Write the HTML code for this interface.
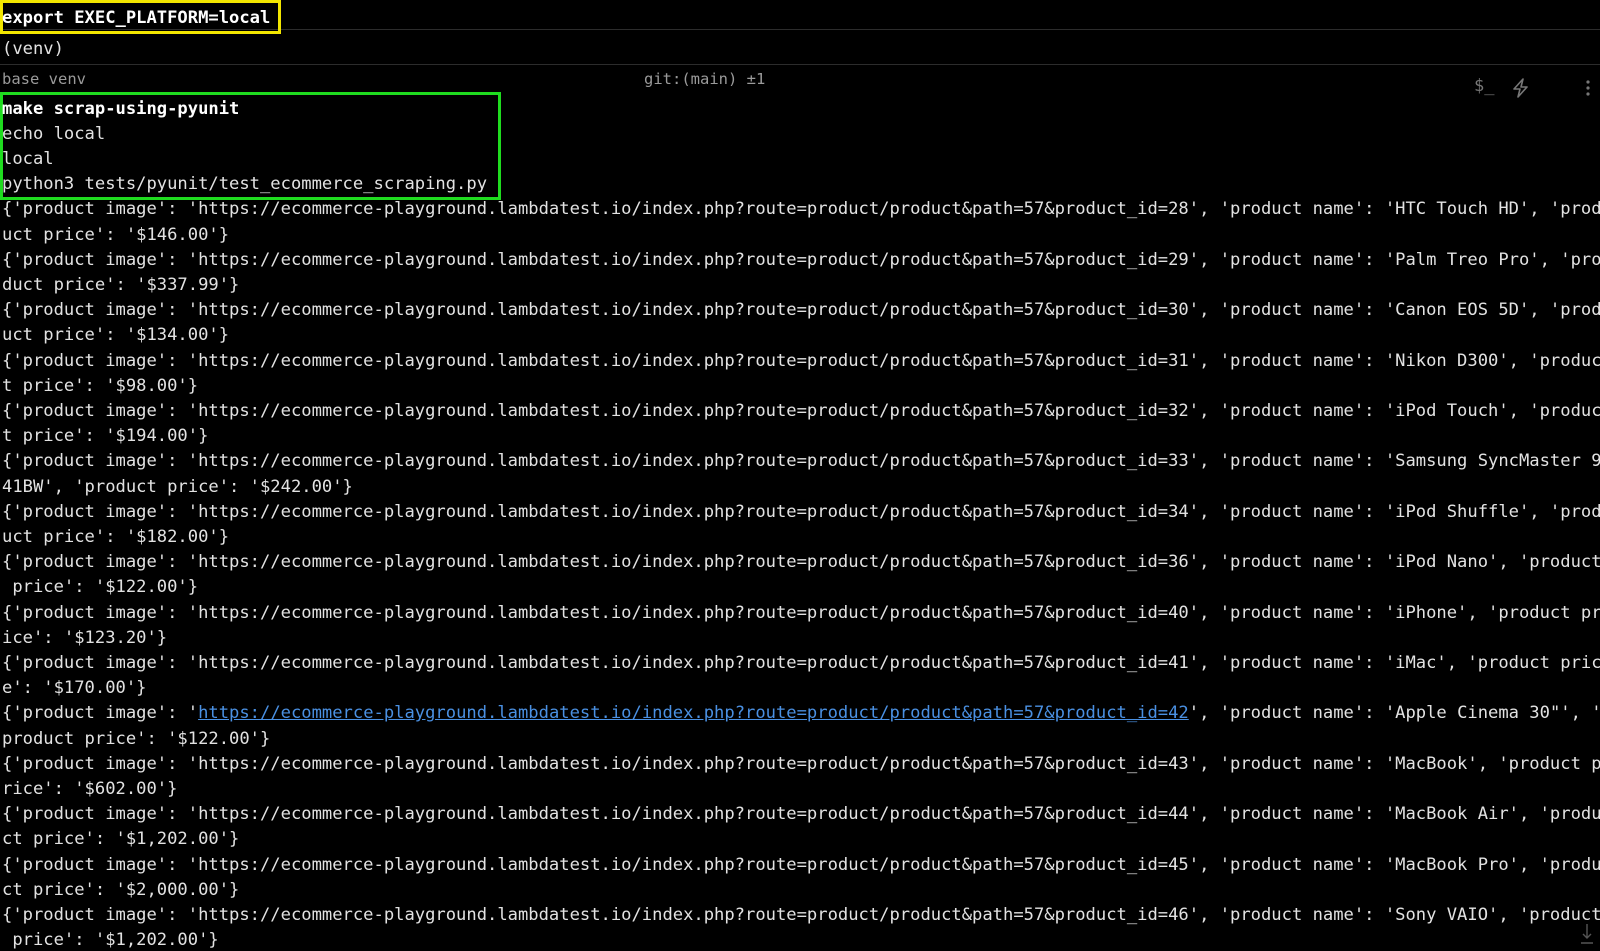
<!DOCTYPE html>
<html><head><meta charset="utf-8"><style>
html,body{margin:0;padding:0;background:#000;width:1600px;height:951px;overflow:hidden}
body{font-family:"DejaVu Sans Mono","Liberation Mono",monospace;font-size:17.15px;color:#e2e2e2;position:relative}
.ab{position:absolute;white-space:pre}
.out{position:absolute;left:2px;top:96.5px;line-height:25.2px;white-space:pre}
.sep{position:absolute;left:0;width:1600px;height:1px;background:#2c2c2c}
a{color:#4a90e2;text-decoration:underline}
b{font-weight:bold;color:#fff}
</style></head><body>
<div class="sep" style="top:29px"></div>
<div class="sep" style="top:64px"></div>
<div class="ab" style="left:0;top:0;width:281px;height:34px;border:3px solid #f2e600;box-sizing:border-box"></div>
<div class="ab" style="left:2px;top:8px;font-weight:bold;color:#fff">export EXEC_PLATFORM=local</div>
<div class="ab" style="left:2px;top:39px">(venv)</div>
<div class="ab" style="left:2px;top:70px;font-size:15.5px;color:#9a9a9a">base venv</div>
<div class="ab" style="left:644px;top:70px;font-size:15.5px;color:#9a9a9a">git:(main) ±1</div>
<div class="ab" style="left:1474px;top:76px;font-size:17px;color:#777">$_</div>
<svg class="ab" style="left:1510px;top:77px" width="22" height="22" viewBox="0 0 22 22"><path d="M13 2 L4 12 H10 L8 20 L17 10 H11 Z" fill="none" stroke="#777" stroke-width="1.6" stroke-linejoin="round"/></svg>
<svg class="ab" style="left:1584px;top:79px" width="8" height="20"><circle cx="4" cy="3" r="1.6" fill="#777"/><circle cx="4" cy="9" r="1.6" fill="#777"/><circle cx="4" cy="15" r="1.6" fill="#777"/></svg>
<div class="ab" style="left:0;top:92px;width:501px;height:108px;border:3px solid #1fdc1f;box-sizing:border-box"></div>
<div class="out"><b>make scrap-using-pyunit</b>
echo local
local
python3 tests/pyunit/test_ecommerce_scraping.py
{'product image': 'https://ecommerce-playground.lambdatest.io/index.php?route=product/product&amp;path=57&amp;product_id=28', 'product name': 'HTC Touch HD', 'prod
uct price': '$146.00'}
{'product image': 'https://ecommerce-playground.lambdatest.io/index.php?route=product/product&amp;path=57&amp;product_id=29', 'product name': 'Palm Treo Pro', 'pro
duct price': '$337.99'}
{'product image': 'https://ecommerce-playground.lambdatest.io/index.php?route=product/product&amp;path=57&amp;product_id=30', 'product name': 'Canon EOS 5D', 'prod
uct price': '$134.00'}
{'product image': 'https://ecommerce-playground.lambdatest.io/index.php?route=product/product&amp;path=57&amp;product_id=31', 'product name': 'Nikon D300', 'produc
t price': '$98.00'}
{'product image': 'https://ecommerce-playground.lambdatest.io/index.php?route=product/product&amp;path=57&amp;product_id=32', 'product name': 'iPod Touch', 'produc
t price': '$194.00'}
{'product image': 'https://ecommerce-playground.lambdatest.io/index.php?route=product/product&amp;path=57&amp;product_id=33', 'product name': 'Samsung SyncMaster 9
41BW', 'product price': '$242.00'}
{'product image': 'https://ecommerce-playground.lambdatest.io/index.php?route=product/product&amp;path=57&amp;product_id=34', 'product name': 'iPod Shuffle', 'prod
uct price': '$182.00'}
{'product image': 'https://ecommerce-playground.lambdatest.io/index.php?route=product/product&amp;path=57&amp;product_id=36', 'product name': 'iPod Nano', 'product
 price': '$122.00'}
{'product image': 'https://ecommerce-playground.lambdatest.io/index.php?route=product/product&amp;path=57&amp;product_id=40', 'product name': 'iPhone', 'product pr
ice': '$123.20'}
{'product image': 'https://ecommerce-playground.lambdatest.io/index.php?route=product/product&amp;path=57&amp;product_id=41', 'product name': 'iMac', 'product pric
e': '$170.00'}
{'product image': '<a>https://ecommerce-playground.lambdatest.io/index.php?route=product/product&amp;path=57&amp;product_id=42</a>', 'product name': 'Apple Cinema 30"', '
product price': '$122.00'}
{'product image': 'https://ecommerce-playground.lambdatest.io/index.php?route=product/product&amp;path=57&amp;product_id=43', 'product name': 'MacBook', 'product p
rice': '$602.00'}
{'product image': 'https://ecommerce-playground.lambdatest.io/index.php?route=product/product&amp;path=57&amp;product_id=44', 'product name': 'MacBook Air', 'produ
ct price': '$1,202.00'}
{'product image': 'https://ecommerce-playground.lambdatest.io/index.php?route=product/product&amp;path=57&amp;product_id=45', 'product name': 'MacBook Pro', 'produ
ct price': '$2,000.00'}
{'product image': 'https://ecommerce-playground.lambdatest.io/index.php?route=product/product&amp;path=57&amp;product_id=46', 'product name': 'Sony VAIO', 'product
 price': '$1,202.00'}</div>
<svg class="ab" style="left:1579px;top:923px" width="16" height="22"><path d="M8 1 V15 M4 11 L8 15 L12 11 M2 20 H14" stroke="#555" stroke-width="1.4" fill="none"/></svg>
</body></html>
